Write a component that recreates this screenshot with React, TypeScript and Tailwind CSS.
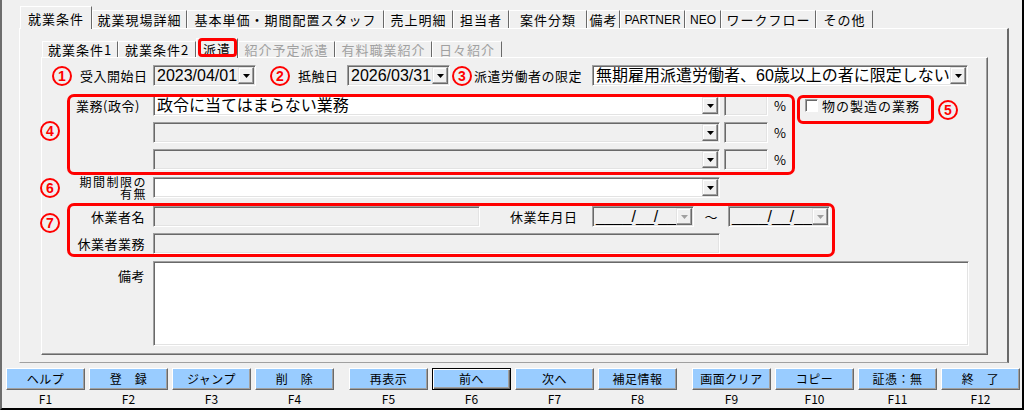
import React from 'react';

type Tab = { label: string; w: string; active?: boolean; disabled?: boolean; mark?: boolean; latin?: boolean };

const topTabs: Tab[] = [
  { label: '就業条件', w: 'w-[72px]', active: true },
  { label: '就業現場詳細', w: 'w-[95px]' },
  { label: '基本単価・期間配置スタッフ', w: 'w-[197px]' },
  { label: '売上明細', w: 'w-[69px]' },
  { label: '担当者', w: 'w-[56px]' },
  { label: '案件分類', w: 'w-[78px]' },
  { label: '備考', w: 'w-[33px]' },
  { label: 'PARTNER', w: 'w-[65px]', latin: true },
  { label: 'NEO', w: 'w-[36px]', latin: true },
  { label: 'ワークフロー', w: 'w-[95px]' },
  { label: 'その他', w: 'w-[57px]' },
];

const subTabs: Tab[] = [
  { label: '就業条件1', w: 'w-[76px]' },
  { label: '就業条件2', w: 'w-[78px]' },
  { label: '派遣', w: 'w-[42px]', active: true, mark: true },
  { label: '紹介予定派遣', w: 'w-[97px]', disabled: true },
  { label: '有料職業紹介', w: 'w-[97px]', disabled: true },
  { label: '日々紹介', w: 'w-[70px]', disabled: true },
];

const keyGroups = [
  [['ヘルプ', 'F1'], ['登　録', 'F2'], ['ジャンプ', 'F3'], ['削　除', 'F4']],
  [['再表示', 'F5'], ['前へ', 'F6'], ['次へ', 'F7'], ['補足情報', 'F8']],
  [['画面クリア', 'F9'], ['コピー', 'F10'], ['証憑：無', 'F11'], ['終　了', 'F12']],
];

const Circle = ({ n }: { n: number }) => (
  <span className="flex h-[20px] w-[20px] shrink-0 items-center justify-center rounded-full border-2 border-[#ff0000] font-['Liberation_Sans',sans-serif] text-[14px] font-bold leading-none text-[#ff0000]">
    {n}
  </span>
);

const RedBox = ({ className }: { className: string }) => (
  <div className={`pointer-events-none absolute border-[3px] border-[#ff0000] ${className}`} />
);

const Arrow = ({ dim }: { dim?: boolean }) => (
  <svg width="7" height="4" viewBox="0 0 7 4">
    <polygon points="0,0 7,0 3.5,4" fill={dim ? '#a0a0a0' : '#000000'} />
  </svg>
);

interface FieldProps {
  className: string;
  text?: string;
  white?: boolean;
  dim?: boolean;
}

const Combo = ({ className, text, white, dim }: FieldProps) => (
  <div
    className={`flex h-[21px] shrink-0 border border-b-white border-l-[#a0a0a0] border-r-white border-t-[#a0a0a0] p-px shadow-[inset_1px_1px_0_#696969,inset_-1px_-1px_0_#e3e3e3] ${white ? 'bg-white' : 'bg-[#f0f0f0]'} ${className}`}>
    <div className="flex min-w-0 flex-1 items-center overflow-hidden whitespace-nowrap pl-[2px] font-['Liberation_Sans','Noto_Sans_CJK_JP',sans-serif] text-[16px] leading-none">
      {text}
    </div>
    <div className="flex w-[16px] shrink-0 items-center justify-center border border-b-[#696969] border-l-[#e3e3e3] border-r-[#696969] border-t-[#e3e3e3] bg-[#f0f0f0] shadow-[inset_-1px_-1px_0_#a0a0a0,inset_1px_1px_0_#ffffff]">
      <Arrow dim={dim} />
    </div>
  </div>
);

const TextBox = ({ className, white }: FieldProps) => (
  <div
    className={`shrink-0 border border-b-white border-l-[#a0a0a0] border-r-white border-t-[#a0a0a0] shadow-[inset_1px_1px_0_#696969,inset_-1px_-1px_0_#e3e3e3] ${white ? 'bg-white' : 'bg-[#f0f0f0]'} ${className}`}
  />
);

const TabItem = ({ tab, sub }: { tab: Tab; sub?: boolean }) => {
  if (tab.active) {
    return (
      <div
        className={`relative z-10 -mb-px flex shrink-0 justify-center border-l border-r border-t border-l-white border-r-[#696969] border-t-white bg-[#f0f0f0] ${sub ? 'h-[20px] pt-[3px]' : 'h-[23px] pt-[5px]'} ${tab.w}`}>
        <span className="whitespace-nowrap text-[13px] leading-none tracking-[1px]">{tab.label}</span>
        {tab.mark && <RedBox className="-top-[1px] bottom-[1px] left-[1px] right-0 rounded-[4px]" />}
      </div>
    );
  }
  const textClass = tab.latin
    ? "font-['Liberation_Sans',sans-serif] text-[12px] leading-none pt-[1px]"
    : 'text-[13px] leading-none tracking-[1px]';
  return (
    <div
      className={`flex shrink-0 justify-center border-l border-r border-t border-l-white border-r-[#696969] border-t-white ${sub ? 'h-[16px] pt-[1px]' : 'h-[18px] pt-[2px]'} ${tab.w}`}>
      <span className={`whitespace-nowrap ${textClass} ${tab.disabled ? 'text-[#a0a0a0]' : 'text-black'}`}>{tab.label}</span>
    </div>
  );
};

export default function App() {
  return (
    <div className="flex h-[410px] w-[1024px] flex-col overflow-hidden border-b-2 border-l-2 border-r-2 border-b-black border-l-[#6d6d6d] border-r-black bg-[#f0f0f0] font-['Noto_Sans_CJK_JP',sans-serif] text-black">
      {/* top tabs */}
      <div className="flex h-[28px] shrink-0 items-end pl-[18px]">
        {topTabs.map(t => (
          <TabItem key={t.label} tab={t} />
        ))}
      </div>

      {/* outer panel */}
      <div className="ml-[17px] flex h-[335px] w-[990px] shrink-0 flex-col border-b border-l border-r-2 border-t border-b-[#a0a0a0] border-l-white border-r-[#696969] border-t-white">
        <div className="flex h-[28px] shrink-0 items-end pl-[22px]">
          {subTabs.map(t => (
            <TabItem key={t.label} tab={t} sub />
          ))}
        </div>

        {/* sub panel */}
        <div className="ml-[21px] flex h-[298px] w-[947px] shrink-0 flex-col border-b border-l border-r border-t border-b-[#696969] border-l-white border-r-[#696969] border-t-white shadow-[inset_-1px_-1px_0_#a0a0a0]">
          {/* row 1 */}
          <div className="mt-[7px] flex h-[21px] items-center pl-[10px]">
            <Circle n={1} />
            <span className="ml-[8px] w-[73px] whitespace-nowrap text-[13px] tracking-[0.5px]">受入開始日</span>
            <Combo className="w-[103px]" text="2023/04/01" />
            <span className="ml-[14px]">
              <Circle n={2} />
            </span>
            <span className="ml-[8px] w-[49px] whitespace-nowrap text-[13px] tracking-[0.5px]">抵触日</span>
            <Combo className="w-[103px]" text="2026/03/31" />
            <span className="ml-[2px]">
              <Circle n={3} />
            </span>
            <span className="ml-[2px] w-[118px] whitespace-nowrap text-[13px] tracking-[0.5px]">派遣労働者の限定</span>
            <Combo className="w-[376px]" white text="無期雇用派遣労働者、60歳以上の者に限定しない" />
          </div>

          {/* ④ 業務 */}
          <div className="relative mt-[9px] flex flex-col gap-[6px]">
            <div className="flex h-[21px] items-center">
              <div className="w-[111px] shrink-0 whitespace-nowrap pl-[34px] text-[13px] tracking-[0.5px]">業務(政令)</div>
              <Combo className="w-[567px]" white text="政令に当てはまらない業務" />
              <TextBox className="ml-[4px] h-[21px] w-[44px]" />
              <span className="ml-[6px] w-[12px] text-[13px]">%</span>
              <div className="ml-[19px] flex items-center">
                <div className="h-[13px] w-[13px] border border-b-white border-l-[#a0a0a0] border-r-white border-t-[#a0a0a0] bg-white shadow-[inset_1px_1px_0_#696969]" />
                <span className="ml-[4px] whitespace-nowrap text-[13px] tracking-[1px]">物の製造の業務</span>
              </div>
              <span className="ml-[18px] translate-y-[4px]">
                <Circle n={5} />
              </span>
            </div>
            <div className="flex h-[21px] items-center">
              <div className="w-[111px] shrink-0" />
              <Combo className="w-[567px]" />
              <TextBox className="ml-[4px] h-[21px] w-[44px]" />
              <span className="ml-[6px] w-[12px] text-[13px]">%</span>
            </div>
            <div className="flex h-[21px] items-center">
              <div className="w-[111px] shrink-0" />
              <Combo className="w-[567px]" />
              <TextBox className="ml-[4px] h-[21px] w-[44px]" />
              <span className="ml-[6px] w-[12px] text-[13px]">%</span>
            </div>
            <RedBox className="left-[25px] top-[-1px] h-[81px] w-[728px] rounded-[7px]" />
            <RedBox className="left-[755px] top-0 h-[29px] w-[137px] rounded-[6px]" />
            <div className="absolute left-[-2px] top-[26px]">
              <Circle n={4} />
            </div>
          </div>

          {/* ⑥ 期間制限 */}
          <div className="mt-[7px] flex h-[21px] items-center">
            <div className="flex w-[111px] shrink-0 items-center">
              <span className="-ml-[2px]">
                <Circle n={6} />
              </span>
              <div className="flex-1 pr-[6px] text-right text-[12px] leading-[12px] tracking-[1.5px]">
                期間制限の
                <br />
                有無
              </div>
            </div>
            <Combo className="w-[567px]" white />
          </div>

          {/* ⑦ 休業者 */}
          <div className="relative mt-[8px] flex flex-col gap-[6px]">
            <div className="flex h-[21px] items-center">
              <div className="w-[111px] shrink-0 pr-[8px] text-right text-[13px] tracking-[0.5px]">休業者名</div>
              <TextBox className="h-[21px] w-[327px]" />
              <span className="ml-[30px] w-[82px] whitespace-nowrap text-[13px] tracking-[0.5px]">休業年月日</span>
              <Combo className="w-[102px]" text="____/__/__" dim />
              <span className="w-[34px] text-center text-[13px]">～</span>
              <Combo className="w-[102px]" text="____/__/__" dim />
            </div>
            <div className="flex h-[21px] items-center">
              <div className="w-[111px] shrink-0 pr-[8px] text-right text-[13px] tracking-[0.5px]">休業者業務</div>
              <TextBox className="h-[21px] w-[567px]" />
            </div>
            <RedBox className="left-[25px] top-[-3px] h-[54px] w-[768px] rounded-[7px]" />
            <div className="absolute left-[-2px] top-[7px]">
              <Circle n={7} />
            </div>
          </div>

          {/* 備考 */}
          <div className="mt-[7px] flex">
            <div className="w-[111px] shrink-0 pr-[8px] pt-[5px] text-right text-[13px] tracking-[0.5px]">備考</div>
            <TextBox className="h-[85px] w-[816px]" white />
          </div>
        </div>
      </div>

      {/* function keys */}
      <div className="mt-[5px] flex gap-[15px] pl-[4px]">
        {keyGroups.map((group, gi) => (
          <div key={gi} className="flex gap-[4px]">
            {group.map(([label, key]) => (
              <div key={key} className="flex w-[79px] flex-col items-center">
                <div
                  className={`flex h-[22px] w-full items-center justify-center bg-[#99ccff] text-[12px] leading-none tracking-[0.5px] ${
                    key === 'F6'
                      ? 'border border-black shadow-[inset_1px_1px_0_#ffffff,inset_-1px_-1px_0_#696969,inset_-2px_-2px_0_#a0a0a0]'
                      : 'border border-b-[#696969] border-l-white border-r-[#696969] border-t-white shadow-[inset_-1px_-1px_0_#a0a0a0]'
                  }`}>
                  {label}
                </div>
                <span className="mt-[3px] text-[12px] leading-none">{key}</span>
              </div>
            ))}
          </div>
        ))}
      </div>
    </div>
  );
}
